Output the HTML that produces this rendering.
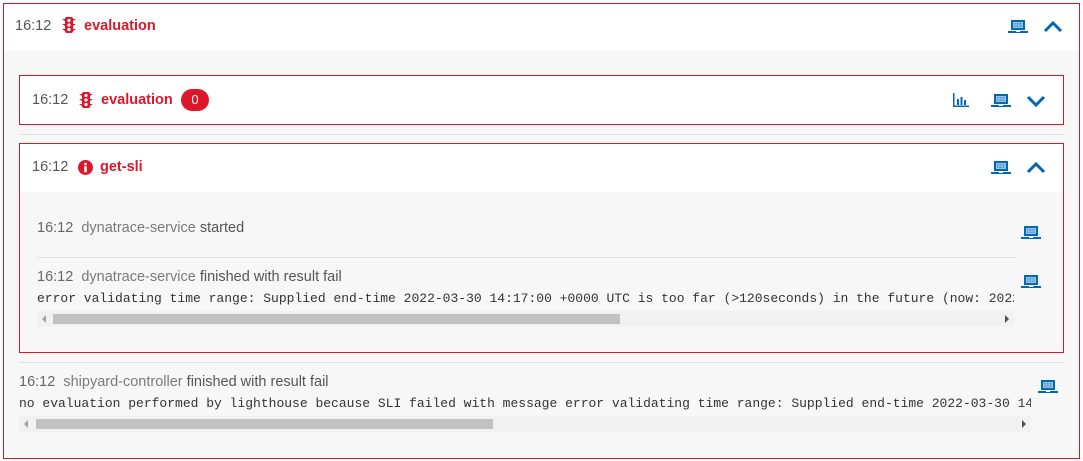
<!DOCTYPE html>
<html><head><meta charset="utf-8"><style>
*{margin:0;padding:0;box-sizing:border-box}
body{width:1083px;height:461px;background:#fff;font-family:"Liberation Sans",sans-serif;position:relative;overflow:hidden;color:#4a4a4a}
.a{position:absolute}
.box{position:absolute;border:1px solid #dc172a;background:#f7f7f7}
.hd{position:absolute;left:0;right:0;top:0;background:#fff}
.t{font-size:14.5px;color:#555}
.red{color:#dc172a;font-weight:bold;font-size:14.5px}
.mono{font-family:"Liberation Mono",monospace;font-size:13px;color:#333;white-space:nowrap;overflow:hidden}
.sb{position:absolute;height:16px;background:#f1f1f1}
.th{position:absolute;top:3px;height:10px;background:#c1c1c1}
.ar{position:absolute;top:4px;width:0;height:0;border-top:4px solid transparent;border-bottom:4px solid transparent}
.line{position:absolute;height:1px;background:#e2e2e2}
</style></head><body>
<svg width="0" height="0" style="position:absolute"><defs>
<g id="lap"><rect x="3" y="1" width="14" height="10" fill="#0068b5"/><rect x="5" y="3" width="10" height="6" fill="#9cc3e6"/><path d="M6 4.5h8M6 6h8M6 7.5h8" stroke="#0068b5" stroke-width="0.5" stroke-dasharray="1 0.5"/><path d="M0 12h20v2H0z" fill="#0068b5"/><rect x="8" y="12" width="4" height="1" fill="#fff"/></g>
<g id="tl"><rect x="3" y="0" width="8" height="16" rx="2" fill="#dc172a"/><path d="M0 2h3v2zM14 2h-3v2zM0 7h3v2zM14 7h-3v2zM0 12h3v2zM14 12h-3v2z" fill="#dc172a"/><circle cx="7" cy="3.5" r="1.6" fill="#fff"/><circle cx="7" cy="8" r="1.6" fill="#fff"/><circle cx="7" cy="12.5" r="1.6" fill="#fff"/></g>
<path id="up" d="M2 10l8-8 8 8" fill="none" stroke="#0068b5" stroke-width="3"/>
<path id="dn" d="M2 2l8 8 8-8" fill="none" stroke="#0068b5" stroke-width="3"/>
</defs></svg>

<div class="box" style="left:3px;top:3px;width:1077px;height:456px">
 <div class="hd" style="height:47px"></div>
</div>
<div class="a t" style="left:15px;top:18px">16:12</div>
<svg class="a" style="left:62px;top:17px" width="14" height="16"><use href="#tl"/></svg>
<div class="a red" style="left:84px;top:18px">evaluation</div>
<svg class="a" style="left:1008px;top:19px" width="20" height="15"><use href="#lap"/></svg>
<svg class="a" style="left:1043px;top:21px" width="20" height="12"><use href="#up"/></svg>

<div class="box" style="left:19px;top:75px;width:1045px;height:50px;background:#fff"></div>
<div class="a t" style="left:32px;top:92px">16:12</div>
<svg class="a" style="left:79px;top:92px" width="14" height="16"><use href="#tl"/></svg>
<div class="a red" style="left:101px;top:92px">evaluation</div>
<div class="a" style="left:181px;top:89px;width:28px;height:22px;border-radius:11px;background:#dc172a;color:#fff;font-size:13px;text-align:center;line-height:22px">0</div>
<svg class="a" style="left:953px;top:93px" width="16" height="14"><path d="M0.75 0v13.25H16" stroke="#0068b5" stroke-width="1.5" fill="none"/><path d="M4 6h2v6H4zM7.5 4h2v8h-2zM11 7h2v5h-2z" fill="#0068b5"/></svg>
<svg class="a" style="left:991px;top:93px" width="20" height="15"><use href="#lap"/></svg>
<svg class="a" style="left:1026px;top:95px" width="20" height="12"><use href="#dn"/></svg>

<div class="line" style="left:19px;top:134px;width:1045px"></div>

<div class="box" style="left:19px;top:143px;width:1045px;height:210px">
 <div class="hd" style="height:48px"></div>
</div>
<div class="a t" style="left:32px;top:159px">16:12</div>
<svg class="a" style="left:78px;top:160px" width="15" height="15"><circle cx="7.5" cy="7.5" r="7.5" fill="#dc172a"/><circle cx="7.5" cy="4" r="1.4" fill="#fff"/><rect x="6.2" y="6.3" width="2.6" height="6" fill="#fff"/></svg>
<div class="a red" style="left:100px;top:159px">get-sli</div>
<svg class="a" style="left:991px;top:160px" width="20" height="15"><use href="#lap"/></svg>
<svg class="a" style="left:1026px;top:162px" width="20" height="12"><use href="#up"/></svg>

<div class="a t" style="left:37px;top:220px"><span style="color:#666">16:12</span>&nbsp; <span style="color:#7a7a7a">dynatrace-service</span> started</div>
<svg class="a" style="left:1021px;top:225px" width="20" height="15"><use href="#lap"/></svg>
<div class="line" style="left:37px;top:257px;width:980px"></div>
<div class="a t" style="left:37px;top:269px"><span style="color:#666">16:12</span>&nbsp; <span style="color:#7a7a7a">dynatrace-service</span> finished with result fail</div>
<svg class="a" style="left:1021px;top:274px" width="20" height="15"><use href="#lap"/></svg>
<div class="a mono" style="left:37px;top:291px;width:977px">error validating time range: Supplied end-time 2022-03-30 14:17:00 +0000 UTC is too far (&gt;120seconds) in the future (now: 2022-03-30 14:12:00)</div>
<div class="sb" style="left:37px;top:311px;width:977px"><div class="th" style="left:16px;width:567px"></div><div class="ar" style="left:5px;border-right:4px solid #a0a0a0"></div><div class="ar" style="right:5px;border-left:4px solid #505050"></div></div>

<div class="line" style="left:19px;top:362px;width:1045px"></div>
<div class="a t" style="left:19px;top:374px"><span style="color:#666">16:12</span>&nbsp; <span style="color:#7a7a7a">shipyard-controller</span> finished with result fail</div>
<svg class="a" style="left:1038px;top:379px" width="20" height="15"><use href="#lap"/></svg>
<div class="a mono" style="left:19px;top:396px;width:1012px">no evaluation performed by lighthouse because SLI failed with message error validating time range: Supplied end-time 2022-03-30 14:17:00</div>
<div class="sb" style="left:19px;top:416px;width:1012px"><div class="th" style="left:17px;width:457px"></div><div class="ar" style="left:5px;border-right:4px solid #a0a0a0"></div><div class="ar" style="right:5px;border-left:4px solid #505050"></div></div>
</body></html>
